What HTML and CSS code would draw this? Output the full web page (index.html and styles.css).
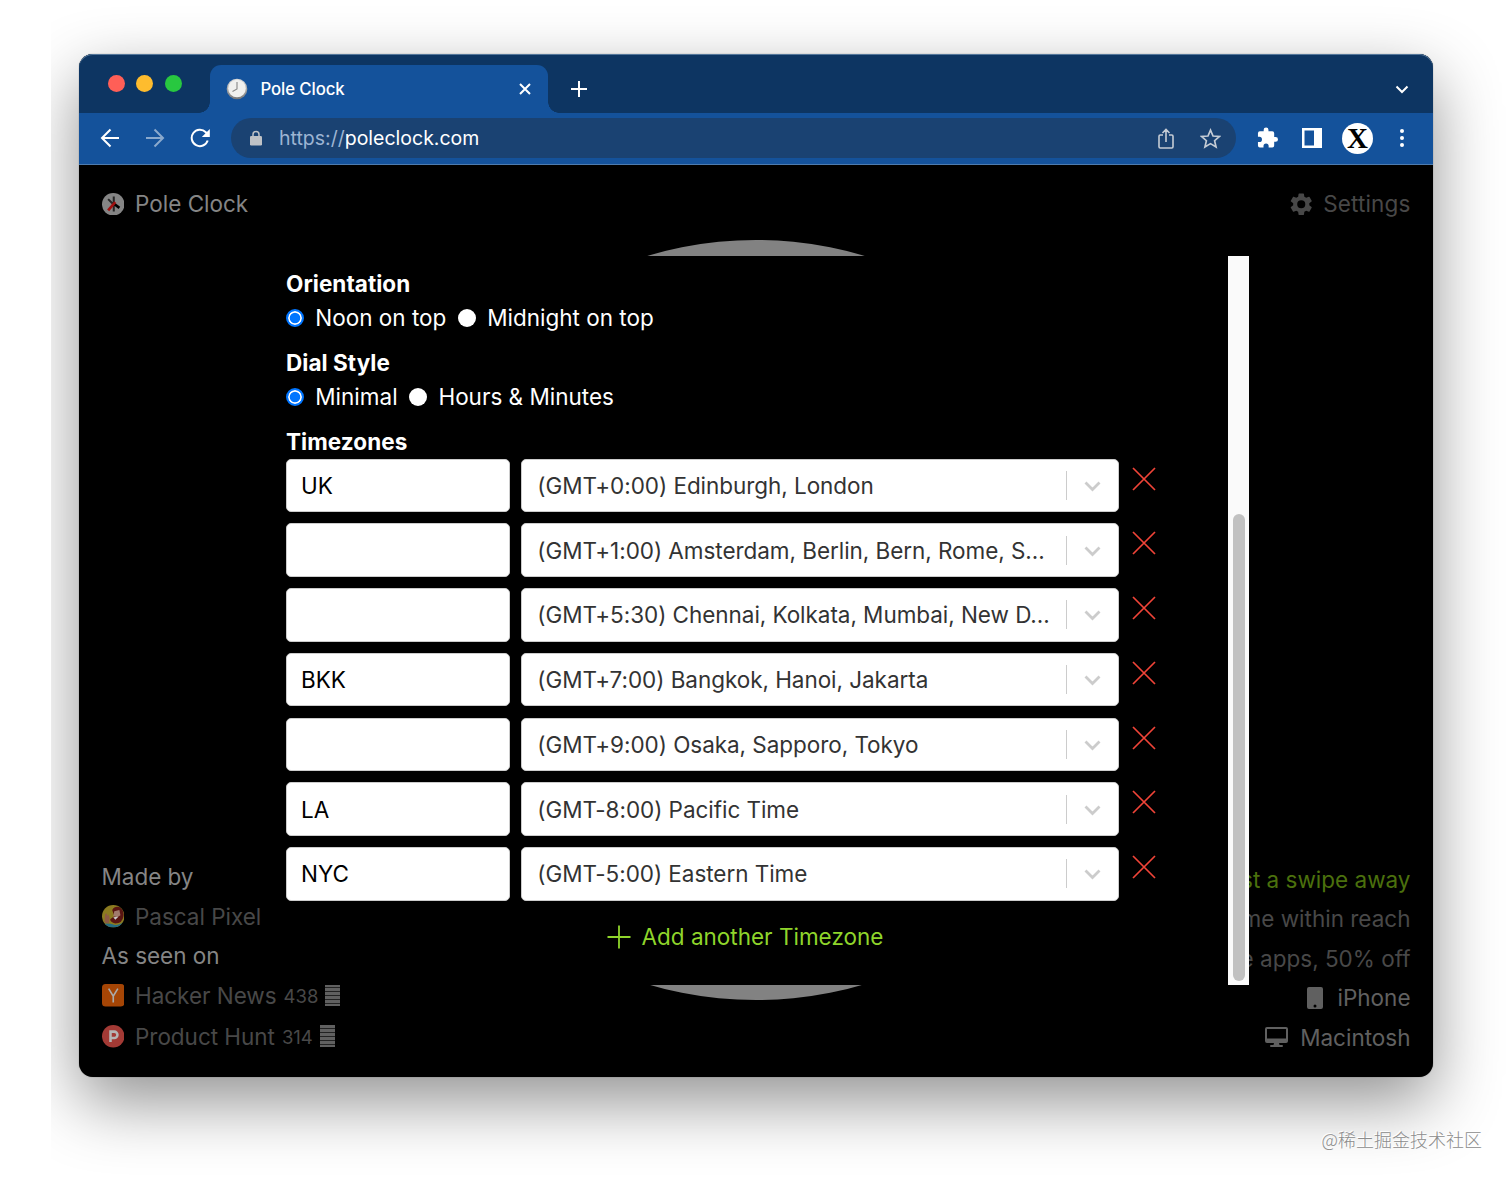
FILE: index.html
```html
<!DOCTYPE html>
<html lang="en">
  <head>
    <meta charset="UTF-8" />
    <meta name="viewport" content="width=device-width, initial-scale=1.0" />
    <title>Pole Clock</title>
    <link rel="stylesheet" href="styles.css">
  </head>
  <body>
    <div class="backdrop">
    <main class="window">
      <!-- tab strip -->
      <div class="tab-strip">
        <div class="lights">
          <span class="light close"></span>
          <span class="light minimize"></span>
          <span class="light maximize"></span>
        </div>
        <div class="tab">
          <svg class="tab-favicon" viewBox="0 0 22 22">
            <defs>
              <linearGradient id="rim" x1="0" y1="0" x2="0" y2="1">
                <stop offset="0" stop-color="#ddd" />
                <stop offset="1" stop-color="#777" />
              </linearGradient>
            </defs>
            <circle cx="11" cy="11" r="10.3" fill="url(#rim)" />
            <circle cx="11" cy="10.5" r="8.8" fill="#f0f0ee" />
            <path d="M11 4v7l-4.500 2.500" fill="none" stroke="#888" stroke-width="1.100" />
          </svg>
          <span class="tab-title">Pole Clock</span>
          <svg class="tab-close" viewBox="0 0 12 12"><path d="M1 1l10 10M11 1L1 11" /></svg>
        </div>
        <svg class="new-tab" viewBox="0 0 18 18"><path d="M9 1v16M1 9h16" /></svg>
        <svg class="tab-search" viewBox="0 0 14 9"><path d="M1.500 1.500L7 7l5.500-5.500" /></svg>
      </div>

      <!-- toolbar -->
      <div class="toolbar">
        <svg class="nav-icon back" viewBox="0 0 20 20"><path d="M19 10H2M10.500 1.500L2 10l8.500 8.500" /></svg>
        <svg class="nav-icon forward" viewBox="0 0 20 20"><path d="M1 10h17M9.500 1.500L18 10l-8.500 8.500" /></svg>
        <svg class="nav-icon reload" viewBox="0 0 20 20">
          <path d="M17.700 12.500A8.200 8.200 0 1 1 15.800 4.200L18 6.400" />
          <path class="solid" d="M19.800 1v8h-8z" />
        </svg>
        <div class="address">
          <svg class="lock" viewBox="0 0 12 16">
            <path d="M3 7V4.500a3 3 0 0 1 6 0V7" fill="none" stroke="#bfc2c6" stroke-width="1.500" />
            <rect y="6" width="12" height="9.500" rx="1.300" fill="#bfc2c6" />
          </svg>
          <span class="url"><span class="scheme">https://</span>poleclock.com</span>
          <svg class="share" viewBox="0 0 16 21"><path d="M5 7H2.200Q1 7 1 8.200v10.600Q1 20 2.200 20h11.600q1.200 0 1.200-1.200V8.200Q15 7 13.800 7H11M8 14V1.500M4.500 5L8 1.500 11.500 5" /></svg>
          <svg class="star" viewBox="0 0 20 20"><path d="M10 2l2.400 5.600 6.100.5-4.600 4 1.400 6L10 14.900l-5.300 3.200 1.400-6-4.600-4 6.100-.5z" /></svg>
        </div>
        <svg class="puzzle" viewBox="0 0 22 22"><path d="M19.500 10.500h-1.500v-4a2 2 0 0 0-2-2h-4V3a2.500 2.500 0 0 0-5 0v1.500H3a2 2 0 0 0-2 2v3.800h1.500a2.700 2.700 0 0 1 0 5.400H1v3.800a2 2 0 0 0 2 2h3.800V20a2.700 2.700 0 0 1 5.400 0v1.500H16a2 2 0 0 0 2-2v-4h1.500a2.500 2.500 0 0 0 0-5z" /></svg>
        <svg class="side-panel" viewBox="0 0 20 20"><path fill-rule="evenodd" d="M0 0h20v20H0zM2.500 2.500v15H12v-15z" /></svg>
        <span class="profile">X</span>
        <svg class="menu" viewBox="0 0 4 18"><circle cx="2" cy="2" r="2" /><circle cx="2" cy="9" r="2" /><circle cx="2" cy="16" r="2" /></svg>
      </div>

      <!-- page behind the dialog -->
      <div class="page">
        <svg class="dial" viewBox="0 0 760 760"><circle cx="380" cy="380" r="380" /></svg>

        <header class="page-header">
          <div class="brand">
            <svg class="icon" viewBox="0 0 22 22">
              <circle cx="11" cy="11" r="11" fill="#858585" />
              <path d="M11.500 3.500V18M6 6l5 5" stroke="#262626" stroke-width="2" fill="none" />
              <path d="M11 10l6 4.500" stroke="#000" stroke-width="2.600" />
              <path d="M13 9L6 17" stroke="#a01010" stroke-width="2.600" />
            </svg>
            <span>Pole Clock</span>
          </div>
          <div class="settings-link">
            <svg class="icon" viewBox="2 2 20 20"><path d="M19.140 12.940c.04-.3.06-.61.06-.94 0-.32-.02-.64-.07-.94l2.030-1.580a.49.49 0 0 0 .12-.61l-1.920-3.320a.488.488 0 0 0-.59-.22l-2.390.96c-.5-.38-1.030-.7-1.620-.94l-.36-2.540a.484.484 0 0 0-.48-.41h-3.840c-.24 0-.43.17-.47.41l-.36 2.540c-.59.24-1.130.57-1.620.94l-2.390-.96c-.22-.08-.47 0-.59.22L2.740 8.870c-.12.21-.08.47.12.61l2.030 1.580c-.05.3-.09.63-.09.94s.02.64.07.94l-2.030 1.580a.49.49 0 0 0-.12.61l1.920 3.320c.12.22.37.29.59.22l2.390-.96c.5.38 1.030.7 1.620.94l.36 2.540c.05.24.24.41.48.41h3.840c.24 0 .44-.17.47-.41l.36-2.540c.59-.24 1.130-.56 1.620-.94l2.390.96c.22.08.47 0 .59-.22l1.920-3.320c.12-.22.07-.47-.12-.61l-2.010-1.580zM12 15.600A3.600 3.600 0 1 1 12 8.400a3.600 3.600 0 0 1 0 7.200z" /></svg>
            <span>Settings</span>
          </div>
        </header>

        <footer class="page-footer">
          <ul class="links credits">
            <li class="label">Made by</li>
            <li>
              <svg class="icon" viewBox="0 0 22 22">
                <clipPath id="face"><circle cx="11" cy="11" r="11" /></clipPath>
                <g clip-path="url(#face)">
                  <path fill="#8b7b20" d="M0 0h22v22H0z" />
                  <path fill="#246b80" d="M0 19q6-2 11 0t11-3v6H0z" />
                  <path fill="#591512" d="M10 5q2-4 7-3 5 3 4 9-1 7-8 7-5-1-5-4l4-3z" />
                  <path fill="#a07a6c" d="M12 6l5-1 1 5-3 2-4-1z" />
                  <path fill="#8c5a45" d="M3 9l1.500-1 1 3 1-2 1 4-1 5-4-1z" />
                  <path fill="#ccc" d="M11 12l5-.5-3 3z" />
                </g>
              </svg>
              <span>Pascal Pixel</span>
            </li>
            <li class="label">As seen on</li>
            <li>
              <svg class="icon" viewBox="0 0 22 22"><rect width="22" height="22" rx="3.500" fill="#a54505" /><path d="M6.500 4.500L11 12l4.500-7.500M11 12v6" fill="none" stroke="#aaa" stroke-width="1.600" /></svg>
              <span>Hacker News</span><small>438</small><i class="stack"></i>
            </li>
            <li class="last">
              <svg class="icon" viewBox="0 0 22 22"><circle cx="11" cy="11" r="11" fill="#a33a35" /><path d="M8.300 16.500V6.500H12a3 3 0 0 1 0 6.200H8.500" fill="none" stroke="#b5b5b5" stroke-width="2.500" /></svg>
              <span>Product Hunt</span><small>314</small><i class="stack"></i>
            </li>
          </ul>
          <ul class="links promo">
            <li class="highlight">Just a swipe away</li>
            <li>Time within reach</li>
            <li>Native apps, 50% off</li>
            <li class="app">
              <svg class="phone" viewBox="0 0 16 22"><path fill-rule="evenodd" d="M2 0h12q2 0 2 2v18q0 2-2 2H2q-2 0-2-2V2Q0 0 2 0zM8 17.500a1.500 1.500 0 1 0 0 3 1.500 1.500 0 0 0 0-3z" /></svg>
              <span>iPhone</span>
            </li>
            <li class="app">
              <svg class="desktop" viewBox="0 0 23 20"><path fill-rule="evenodd" d="M2 0h19q2 0 2 2v12q0 2-2 2h-7l.5 2H17q1 0 1 1t-1 1H6q-1 0-1-1t1-1h2.500L9 16H2q-2 0-2-2V2Q0 0 2 0zM2 2v9.500h19V2z" /></svg>
              <span>Macintosh</span>
            </li>
          </ul>
        </footer>

        <!-- settings dialog -->
        <section class="dialog">
          <form class="settings">
            <h2>Orientation</h2>
            <div class="options">
              <label><i class="radio checked"></i>Noon on top</label>
              <label><i class="radio"></i>Midnight on top</label>
            </div>
            <h2>Dial Style</h2>
            <div class="options">
              <label><i class="radio checked"></i>Minimal</label>
              <label><i class="radio"></i>Hours &amp; Minutes</label>
            </div>
            <h2>Timezones</h2>
            <div class="zones"></div>
            <div class="add">
              <svg viewBox="0 0 24 24"><path d="M12 .5v23M.5 12h23" /></svg>
              <span>Add another Timezone</span>
            </div>
          </form>
          <div class="scrollbar"><div class="thumb"></div></div>
        </section>
      </div>
    </main>
    </div>
    <div class="watermark">@稀土掘金技术社区</div>

    <script src="script.js"></script>
  </body>
</html>
```

FILE: styles.css
```css
* {
  box-sizing: border-box;
}

body {
  margin: 0;
  overflow: hidden;
  background: #fff;
  font-family: Inter, "Liberation Sans", sans-serif;
}

svg {
  display: block;
  flex: none;
}

h2,
ul {
  margin: 0;
  padding: 0;
}

.backdrop {
  height: 1181px;
  margin-left: 51px;
  padding: 54px 0 0 28px;
  overflow: hidden;
}

.window {
  width: 1354px;
  height: 1023px;
  display: flex;
  flex-direction: column;
  border-radius: 14px;
  background: #000;
  box-shadow: 0 0 1px rgba(0, 0, 0, 0.6), 0 25px 66px rgba(0, 0, 0, 0.43);
}

/* tab strip */
.tab-strip {
  height: 59px;
  display: flex;
  align-items: center;
  padding: 11px 24px 0 29px;
  background: #0d3562;
  border-radius: 14px 14px 0 0;
  box-shadow: inset 0 1px #54779b;
}

.lights {
  display: flex;
  gap: 11.300px;
  margin: -11px 28.400px 0 0;
}

.light {
  width: 17px;
  height: 17px;
  border-radius: 50%;
}

.close {
  background: #ff5f57;
}

.minimize {
  background: #febc2e;
}

.maximize {
  background: #28c840;
}

.tab {
  position: relative;
  width: 338px;
  height: 48px;
  display: flex;
  align-items: center;
  padding: 0 17px 1px 16px;
  color: #fff;
  background: #14529b;
  border-radius: 11px 11px 0 0;
}

/* flared feet of the tab */
.tab::before,
.tab::after {
  content: "";
  position: absolute;
  bottom: 0;
  width: 11px;
  height: 11px;
}

.tab::before {
  left: -11px;
  background: radial-gradient(circle at 0 0, transparent 10.5px, #14529b 11px);
}

.tab::after {
  right: -11px;
  background: radial-gradient(circle at 100% 0, transparent 10.5px, #14529b 11px);
}

.tab-favicon {
  width: 22px;
  height: 22px;
  margin-right: 12.500px;
}

.tab-title {
  flex: 1;
  font-size: 16.800px;
  font-weight: 500;
  letter-spacing: -0.1px;
}

.tab-close {
  width: 12px;
  height: 12px;
}

.tab-close,
.new-tab,
.tab-search {
  fill: none;
  stroke: #fff;
  stroke-width: 2;
}

.new-tab {
  width: 18px;
  height: 18px;
  margin-left: 22px;
}

.tab-search {
  width: 14px;
  height: 9px;
  margin-left: auto;
}

/* toolbar */
.toolbar {
  height: 52px;
  display: flex;
  align-items: center;
  padding: 0 29px 1px 21px;
  background: #14529b;
  border-bottom: 1px solid #4e7caf;
}

.nav-icon {
  width: 20px;
  height: 20px;
  margin-right: 25px;
  fill: none;
  stroke: #fff;
  stroke-width: 2;
}

.forward {
  opacity: 0.5;
}

.reload {
  margin-right: 21px;
}

.reload .solid {
  fill: #fff;
  stroke: none;
}

.address {
  width: 1005px;
  height: 40px;
  display: flex;
  align-items: center;
  padding: 0 15px 0 19px;
  background: #1a4272;
  border-radius: 20px;
}

.lock {
  width: 12px;
  height: 16px;
  margin-right: 17px;
}

.url {
  flex: 1;
  color: #fff;
  font-size: 19.500px;
}

.scheme {
  color: #9db4d2;
}

.share,
.star {
  fill: none;
  stroke: #c5ccd5;
  stroke-width: 1.600;
}

.share {
  width: 16px;
  height: 21px;
  margin-right: 26px;
}

.star {
  width: 21px;
  height: 21px;
}

.puzzle,
.side-panel,
.menu {
  fill: #fff;
}

.puzzle {
  width: 21px;
  height: 21px;
  margin: 0 24px 2px 21px;
}

.side-panel {
  width: 20px;
  height: 20px;
}

.profile {
  width: 31px;
  height: 31px;
  margin: 0 27px 0 20px;
  border-radius: 50%;
  background: #fff;
  color: #000;
  font: bold 29px/31px "Liberation Serif", serif;
  text-align: center;
}

.menu {
  width: 4px;
  height: 18px;
}

/* page */
.page {
  position: relative;
  flex: 1;
  display: flex;
  flex-direction: column;
  justify-content: space-between;
  padding: 19px 22.500px 20px;
  color: #484848;
  font-size: 22.500px;
}

.dial {
  position: absolute;
  top: 75.200px;
  left: 297px;
  width: 760px;
  height: 760px;
  fill: #828282;
}

.page-header,
.page-footer {
  display: flex;
  justify-content: space-between;
}

.page-header {
  line-height: 40px;
}

.page-footer {
  align-items: flex-end;
}

.brand,
.settings-link,
.links li {
  display: flex;
  align-items: center;
}

.brand {
  color: #858585;
}

.settings-link {
  letter-spacing: 0.15px;
}

.icon {
  width: 22.500px;
  height: 22.500px;
  margin-right: 11px;
  fill: #484848;
}

.links {
  list-style: none;
  line-height: 39.500px;
}

.links li {
  height: 39.500px;
}

.links .label {
  color: #858585;
}

.links .last {
  margin-top: 1.500px;
}

.credits {
  margin-bottom: 1px;
  letter-spacing: -0.03px;
}

.links small {
  margin: 2px 7px 0;
  font-size: 18.500px;
}

.stack {
  width: 15px;
  height: 22px;
  background: repeating-linear-gradient(#606060 0 3px, #222 3px 4px);
}

.promo li {
  justify-content: flex-end;
}

.promo .highlight {
  color: #4b700d;
}

.promo .app {
  color: #606060;
  fill: #606060;
}

.phone {
  width: 16px;
  height: 22px;
  margin-right: 14px;
}

.desktop {
  width: 23px;
  height: 20px;
  margin-right: 12px;
}

/* settings dialog */
.dialog {
  position: absolute;
  top: 91px;
  left: 184px;
  width: 986px;
  height: 729px;
  display: flex;
  justify-content: space-between;
  background: #000;
  color: #fff;
}

.settings {
  width: 900px;
  padding: 11px 0 0 23px;
}

.settings h2 {
  font-size: 22.500px;
  font-weight: 700;
  line-height: 34px;
  letter-spacing: 0.05px;
}

.options {
  height: 34px;
  display: flex;
  gap: 11.500px;
  margin-bottom: 10.800px;
  line-height: 34px;
}

.options label {
  display: flex;
  align-items: center;
}

.radio {
  width: 18px;
  height: 18px;
  margin-right: 11.300px;
  border-radius: 50%;
  background: #fff;
}

.radio.checked {
  background: #0075ff;
  border: 2px solid #0075ff;
  box-shadow: inset 0 0 0 1.700px #fff;
}

.zone {
  display: flex;
  margin-bottom: 11.250px;
}

.zone-name,
.zone-select {
  flex: none;
  height: 53.500px;
  display: flex;
  align-items: center;
  border: 1px solid #ccc;
  border-radius: 5px;
  background: #fff;
}

.zone-name {
  width: 224.300px;
  margin-right: 11px;
  padding-left: 14px;
  color: #000;
}

.zone-select {
  width: 597.500px;
  padding-left: 15px;
  color: #333;
}

.zone-label {
  flex: 1;
  white-space: nowrap;
  letter-spacing: -0.05px;
}

.separator {
  width: 1px;
  height: 29px;
  background: #ccc;
}

.chevron {
  width: 17px;
  height: 11px;
  margin: 2px 17px 0;
  fill: none;
  stroke: #ccc;
  stroke-width: 2.800;
}

.remove {
  width: 24px;
  height: 24px;
  margin: 8px 0 0 13px;
  fill: none;
  stroke: #f04438;
  stroke-width: 1.700;
}

.add {
  display: flex;
  align-items: center;
  gap: 11px;
  margin: 19px 0 0 320.500px;
  color: #8fd52b;
  line-height: 34px;
}

.add svg {
  width: 24px;
  height: 24px;
  stroke: #8fd52b;
  stroke-width: 1.800;
}

.scrollbar {
  width: 21px;
  padding: 258px 4px 4px 5px;
  background: #fafafa;
}

.thumb {
  height: 467px;
  border-radius: 6px;
  background: #c1c1c1;
}

.watermark {
  position: absolute;
  right: 30px;
  bottom: 28px;
  color: #8c8c8c;
  font: 300 18px/27px "Noto Sans CJK SC", sans-serif;
  text-shadow: -1px -1px #fff;
}
```

FILE: script.js
```js
const zones = [
  ["UK", "(GMT+0:00) Edinburgh, London"],
  ["", "(GMT+1:00) Amsterdam, Berlin, Bern, Rome, S..."],
  ["", "(GMT+5:30) Chennai, Kolkata, Mumbai, New D..."],
  ["BKK", "(GMT+7:00) Bangkok, Hanoi, Jakarta"],
  ["", "(GMT+9:00) Osaka, Sapporo, Tokyo"],
  ["LA", "(GMT-8:00) Pacific Time"],
  ["NYC", "(GMT-5:00) Eastern Time"],
];

document.querySelector(".zones").innerHTML = zones
  .map(
    ([name, label]) => `
      <div class="zone">
        <div class="zone-name">${name}</div>
        <div class="zone-select">
          <span class="zone-label">${label}</span>
          <span class="separator"></span>
          <svg class="chevron" viewBox="0 0 17 11"><path d="M1.500 1.500l7 7 7-7" /></svg>
        </div>
        <svg class="remove" viewBox="0 0 24 24"><path d="M1 1l22 22M23 1L1 23" /></svg>
      </div>`
  )
  .join("");
```
